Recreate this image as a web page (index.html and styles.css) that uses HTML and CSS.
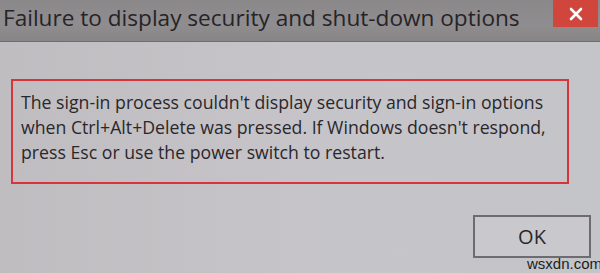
FILE: index.html
```html
<!DOCTYPE html>
<html>
<head>
<meta charset="utf-8">
<link rel="stylesheet" href="styles.css">
</head>
<body>
<div class="window">
  <div class="titlebar">
    <div class="title">Failure to display security and shut-down options</div>
    <div class="close">
      <svg width="14" height="14" viewBox="0 0 14 14"><path d="M2 2 L12 12 M12 2 L2 12" stroke="#fff" stroke-width="2.6" stroke-linecap="round"/></svg>
    </div>
  </div>
  <div class="content">
    <div class="msgbox">
      <p class="msg">The sign-in process couldn't display security and sign-in options when Ctrl+Alt+Delete was pressed. If Windows doesn't respond, press Esc or use the power switch to restart.</p>
    </div>
    <div class="footer">
      <button class="ok">OK</button>
    </div>
  </div>
  <div class="watermark">wsxdn.com</div>
</div>
</body>
</html>
```
FILE: styles.css
```css
html, body {
  margin: 0;
  padding: 0;
}
body {
  width: 600px;
  height: 273px;
  overflow: hidden;
  background: #c3c2c6;
  font-family: "Open Sans", "Noto Sans", sans-serif;
}
.window {
  position: relative;
  width: 600px;
  height: 273px;
  background: linear-gradient(90deg, #c0bdc1 0%, #c6c4c8 50%, #c4c5c9 100%);
}
.titlebar {
  height: 41px;
  display: flex;
  align-items: flex-start;
  justify-content: space-between;
  background: linear-gradient(180deg, #8a8889 0%, #8f8d8f 60%, #878586 100%);
  border-bottom: 1px solid #6f6d6e;
}
.title {
  padding-left: 3px;
  padding-top: 3px;
  font-size: 22.6px;
  line-height: 30px;
  color: #262426;
  white-space: nowrap;
}
.close {
  width: 45px;
  height: 27px;
  margin-right: 2px;
  background: #d0463d;
  display: flex;
  align-items: center;
  justify-content: center;
}
.content {
  padding: 37px 31px 0 11px;
}
.msgbox {
  height: 92px;
  border: 2px solid #d8343c;
  padding: 9px 0 0 8px;
}
.msg {
  margin: 0;
  font-size: 17.7px;
  line-height: 25px;
  color: #2a272b;
  width: 545px;
}
.footer {
  display: flex;
  justify-content: flex-end;
  margin-top: 31px;
  margin-right: -22px;
}
.ok {
  width: 118px;
  height: 43px;
  border: 2px solid #6e6c70;
  background: #c9c8cc;
  font-family: "Open Sans", "Noto Sans", sans-serif;
  font-size: 20px;
  color: #2a282b;
  padding: 0;
}
.watermark {
  position: absolute;
  left: 527px;
  top: 255px;
  font-family: "Liberation Sans", Arial, sans-serif;
  font-size: 15px;
  line-height: 17px;
  color: #1c1c1e;
}
```
